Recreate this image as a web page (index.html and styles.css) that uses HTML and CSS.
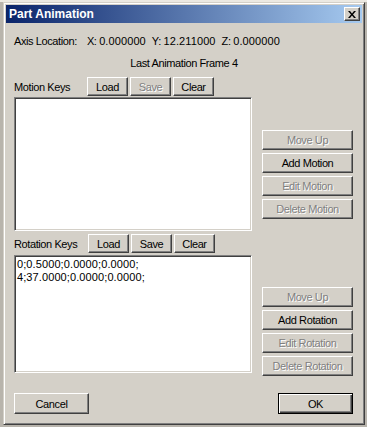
FILE: index.html
```html
<!DOCTYPE html>
<html>
<head>
  <title>Part Animation</title>
  <meta name="viewport" content="width=device-width, initial-scale=1.0">
  <link rel="stylesheet" href="styles.css">
</head>
<body>
  <div class="desk">
    <div class="dialog">
      <div class="titlebar">
        <span class="title">Part Animation</span>
        <button class="close" aria-label="Close">
          <svg width="8" height="7" viewBox="0 0 8 7"><path d="M0 0h2l2 2.5 2-2.5h2l-3 3.5 3 3.5h-2l-2-2.5-2 2.5h-2l3-3.5z" fill="#000"/></svg>
        </button>
      </div>

      <div class="content">
        <div class="axis">
          <span class="axis-label">Axis Location:</span>
          <span>X: <span class="num">0.000000</span></span>
          <span>Y: <span class="num">12.211000</span></span>
          <span>Z: <span class="num">0.000000</span></span>
        </div>
        <div class="frame">Last Animation Frame 4</div>

        <div class="keys motion">
          <div class="keys-head">
            <span class="keys-label">Motion Keys</span>
            <button class="btn small">Load</button>
            <button class="btn small" disabled>Save</button>
            <button class="btn small">Clear</button>
          </div>
          <div class="keys-main">
            <div class="listbox"></div>
            <div class="side">
              <button class="btn side-btn" disabled>Move Up</button>
              <button class="btn side-btn">Add Motion</button>
              <button class="btn side-btn" disabled>Edit Motion</button>
              <button class="btn side-btn" disabled>Delete Motion</button>
            </div>
          </div>
        </div>

        <div class="keys rotation">
          <div class="keys-head">
            <span class="keys-label">Rotation Keys</span>
            <button class="btn small">Load</button>
            <button class="btn small">Save</button>
            <button class="btn small">Clear</button>
          </div>
          <div class="keys-main">
            <div class="listbox">
              <div class="item">0;0.5000;0.0000;0.0000;</div>
              <div class="item">4;37.0000;0.0000;0.0000;</div>
            </div>
            <div class="side">
              <button class="btn side-btn" disabled>Move Up</button>
              <button class="btn side-btn">Add Rotation</button>
              <button class="btn side-btn" disabled>Edit Rotation</button>
              <button class="btn side-btn" disabled>Delete Rotation</button>
            </div>
          </div>
        </div>

        <div class="footer">
          <button class="btn wide">Cancel</button>
          <button class="btn wide default">OK</button>
        </div>
      </div>
    </div>
  </div>
</body>
</html>
```

FILE: styles.css
```css
body {
  margin: 0;
  background: #b8b4ac;
  font-family: "Liberation Sans", Arial, sans-serif;
  font-size: 11px;
  letter-spacing: -0.4px;
  color: #000;
}

.desk {
  width: 367px;
  height: 427px;
  padding: 2px 0 0 3px;
  box-sizing: border-box;
  background: linear-gradient(#ece9e2 0 2px, #b8b4ac 2px);
}

/* classic raised window frame */
.dialog {
  width: 362px;
  height: 423px;
  box-sizing: border-box;
  padding: 2px;
  background: #d4d0c8;
  border: 1px solid;
  border-color: #d4d0c8 #404040 #404040 #d4d0c8;
  box-shadow: inset 1px 1px #fff, inset -1px -1px #808080;
  display: flex;
  flex-direction: column;
}

.titlebar {
  height: 18px;
  display: flex;
  align-items: center;
  justify-content: space-between;
  padding: 0 2px 0 3px;
  background: linear-gradient(to right, #0a246a, #a6caf0);
}

.title {
  color: #fff;
  font-weight: bold;
  font-size: 12px;
  letter-spacing: 0;
}

.close {
  width: 16px;
  height: 14px;
  padding: 0;
  display: flex;
  align-items: center;
  justify-content: center;
  background: #d4d0c8;
  border: 1px solid;
  border-color: #fff #404040 #404040 #fff;
  box-shadow: inset -1px -1px #808080;
}

.content {
  padding: 12px 0 0 8px;
}

.axis {
  display: flex;
  gap: 6px;
  line-height: 13px;
}

.axis-label {
  margin-right: 4px;
}

.num {
  letter-spacing: 0.1px;
}

.frame {
  margin-top: 9px;
  line-height: 13px;
  text-align: center;
  padding-right: 8px;
}

.keys-head {
  display: flex;
  align-items: center;
  height: 19px;
  gap: 2px;
}

.keys-label {
  width: 71px;
}

.motion .keys-head {
  margin-top: 7px;
}

.rotation .keys-head {
  margin-top: 3px;
}

.rotation .keys-label {
  width: 72px;
}

.keys-main {
  display: flex;
  margin-top: 1px;
  gap: 10px;
}

.rotation .keys-main {
  margin-top: 2px;
}

.listbox {
  width: 238px;
  box-sizing: border-box;
  background: #fff;
  border: 1px solid;
  border-color: #808080 #fff #fff #808080;
  box-shadow: inset 1px 1px #404040, inset -1px -1px #d4d0c8;
  padding: 2px 2px;
  line-height: 13px;
  letter-spacing: 0.1px;
}

.motion .listbox {
  height: 134px;
}

.rotation .listbox {
  height: 118px;
}

.side {
  display: flex;
  flex-direction: column;
  gap: 3px;
  padding-top: 33px;
}

.rotation .side {
  padding-top: 32px;
}

.btn {
  font-family: inherit;
  font-size: 11px;
  letter-spacing: -0.4px;
  color: #000;
  background: #d4d0c8;
  border: 1px solid;
  border-color: #fff #404040 #404040 #fff;
  box-shadow: inset -1px -1px #808080;
  padding: 0;
}

.btn:disabled {
  color: #808080;
  text-shadow: 1px 1px #fff;
}

.small {
  width: 41px;
  height: 19px;
}

.side-btn {
  width: 91px;
  height: 20px;
}

.footer {
  display: flex;
  justify-content: space-between;
  margin-top: 17px;
  width: 339px;
}

.wide {
  width: 75px;
  height: 21px;
}

.default {
  border: 1px solid #000;
  box-shadow: inset 1px 1px #fff, inset -1px -1px #404040, inset -2px -2px #808080;
}
```
